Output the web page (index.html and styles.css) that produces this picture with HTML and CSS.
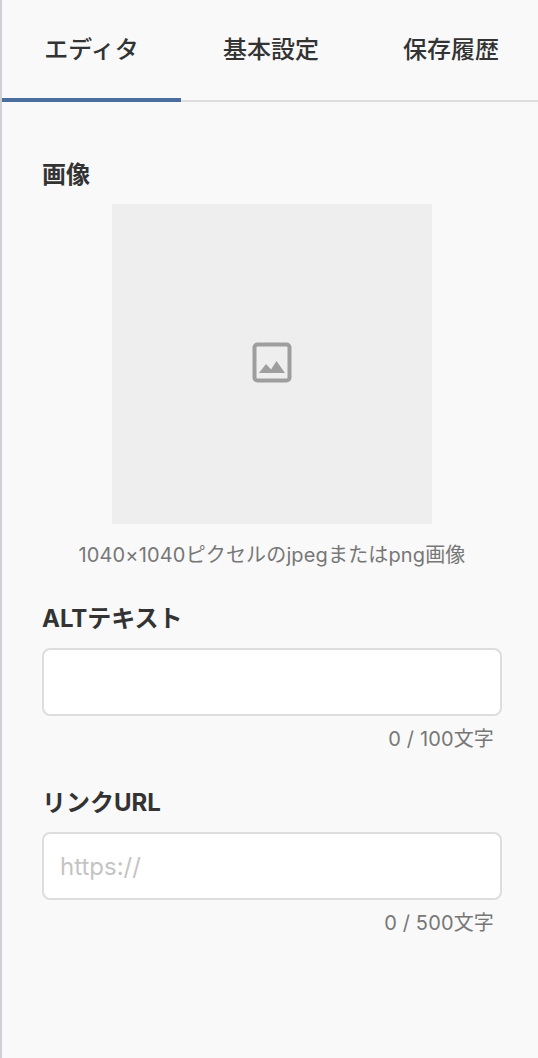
FILE: index.html
```html
<!DOCTYPE html>
<html lang="ja">
<head>
  <meta charset="UTF-8">
  <meta name="viewport" content="width=device-width, initial-scale=1.0">
  <title>エディタ</title>
  <link rel="stylesheet" href="styles.css">
</head>
<body>
  <div class="panel">
    <!-- タブ -->
    <div class="tabs">
      <div class="tab active">エディタ</div>
      <div class="tab">基本設定</div>
      <div class="tab">保存履歴</div>
    </div>

    <div class="form">
      <div class="field">
        <div class="label">画像</div>
        <div class="image-box">
          <svg class="image-icon" width="40" height="41" viewBox="0 0 40 41">
            <rect x="2.500" y="2.500" width="35" height="36" rx="3" fill="none" stroke="#9e9e9e" stroke-width="4"/>
            <path d="M7 31 L14 22 L19 27.500 L24.500 19 L33 31 Z" fill="#9e9e9e"/>
          </svg>
        </div>
        <p class="image-note">1040×1040ピクセルのjpegまたはpng画像</p>
      </div>

      <div class="field">
        <div class="label">ALTテキスト</div>
        <input class="text-input" type="text">
        <p class="counter">0 / 100文字</p>
      </div>

      <div class="field">
        <div class="label">リンクURL</div>
        <input class="text-input" type="text" placeholder="https://">
        <p class="counter">0 / 500文字</p>
      </div>
    </div>
  </div>
</body>
</html>
```

FILE: styles.css
```css
* {
  box-sizing: border-box;
  margin: 0;
  padding: 0;
}
body {
  background-color: #f9f9f9;
  color: #333;
  font-family: Inter, "Noto Sans CJK JP", sans-serif;
  overflow: hidden;
}
.panel {
  height: 1058px;
  border-left: 2px solid #cfcfd6;
  overflow: hidden;
}

/* タブ */
.tabs {
  display: grid;
  grid-template-columns: 179px 180px 180px;
  height: 102px;
  border-bottom: 2px solid #dedede;
}
.tab {
  height: 100px;
  padding-top: 32px;
  font-size: 24px;
  line-height: 36px;
  font-weight: 500;
  text-align: center;
  white-space: nowrap;
}
.tab.active {
  height: 102px;
  border-bottom: 4px solid #4a6f9f;
}

/* フォーム */
.form {
  padding: 55px 36px 0 40px;
}
.field {
  margin-bottom: 31px;
}
.label {
  font-size: 24px;
  line-height: 36px;
  font-weight: 700;
  margin-bottom: 11px;
}
.image-box {
  display: flex;
  align-items: center;
  justify-content: center;
  width: 320px;
  height: 320px;
  margin: 0 auto;
  padding-bottom: 4px;
  background-color: #eee;
}
.image-note {
  margin-top: 16px;
  font-size: 20px;
  line-height: 30px;
  letter-spacing: 0.15px;
  color: #777;
  text-align: center;
}
.text-input {
  display: block;
  width: 100%;
  height: 68px;
  padding: 0 16px;
  border: 2px solid #ddd;
  border-radius: 8px;
  background-color: #fff;
  font-family: inherit;
  font-size: 24px;
  outline: none;
}
.text-input::placeholder {
  color: #c4c4c4;
}
.counter {
  margin-top: 8px;
  padding-right: 8px;
  font-size: 20px;
  line-height: 30px;
  letter-spacing: 0.15px;
  color: #777;
  text-align: right;
}
```
